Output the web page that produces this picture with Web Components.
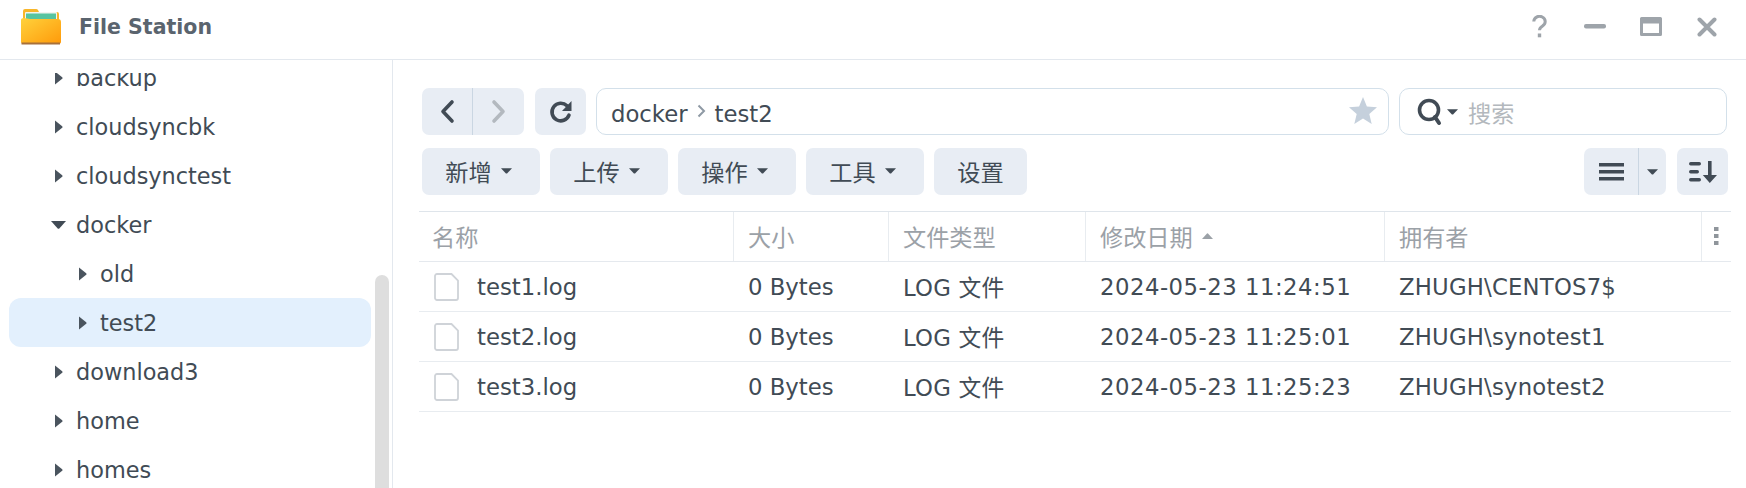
<!DOCTYPE html>
<html>
<head>
<meta charset="utf-8">
<style>
  html, body { margin: 0; height: 488px; overflow: hidden; background: #fff; }
  body { font: 22.75px "DejaVu Sans", "Noto Sans CJK SC", sans-serif; color: #414b55; }
</style>
</head>
<body>
<fs-window></fs-window>
<script>
const CARET = `<svg width="11" height="6" viewBox="0 0 12 6"><path d="M0 0h12L6.600 5.600q-.6.500-1.200 0z" fill="currentColor"/></svg>`;
const ICONS = {
  back: `<svg width="16" height="25" viewBox="0 0 16 25"><path d="M13 3 4 12.500 13 22" fill="none" stroke="currentColor" stroke-width="3.600" stroke-linecap="round" stroke-linejoin="round"/></svg>`,
  forward: `<svg width="16" height="25" viewBox="0 0 16 25"><path d="M3 3l9 9.500L3 22" fill="none" stroke="currentColor" stroke-width="3.600" stroke-linecap="round" stroke-linejoin="round"/></svg>`,
  refresh: `<svg width="24" height="24" viewBox="0 0 24 24"><path d="M20 15.200A8.800 8.800 0 1 1 18 5.800" fill="none" stroke="currentColor" stroke-width="3.600" stroke-linecap="round"/><path d="M22.500 1v10H13z" fill="currentColor"/></svg>`,
  list: `<svg width="25" height="18" viewBox="0 0 25 18"><path d="M0 0h25v3.600H0zM0 7h25v3.600H0zM0 14h25v3.600H0z" fill="currentColor"/></svg>`,
  sort: `<svg width="30" height="24" viewBox="0 0 30 24"><g fill="currentColor"><rect x="1" y="2" width="12" height="3.400" rx="1.700"/><rect x="1" y="10" width="10" height="3.400" rx="1.700"/><rect x="1" y="18" width="12" height="3.400" rx="1.700"/><path d="M20 1h3.600v14H29l-7.200 8-7-8H20z"/></g></svg>`
};

class FsWindow extends HTMLElement {
  constructor() {
    super();
    this.attachShadow({ mode: 'open' }).innerHTML = `
      <style>
        :host { display: grid; grid-template-rows: 60px 428px; height: 488px; }
        .body { display: grid; grid-template-columns: 393px 1fr; min-height: 0; }
      </style>
      <fs-titlebar></fs-titlebar>
      <div class="body">
        <fs-tree></fs-tree>
        <fs-main></fs-main>
      </div>`;
  }
}

class FsTitlebar extends HTMLElement {
  constructor() {
    super();
    this.attachShadow({ mode: 'open' }).innerHTML = `
      <style>
        :host { display: flex; align-items: center; box-sizing: border-box; height: 60px; border-bottom: 1px solid #e3e8ee; padding: 0 11px 6px 20px; }
        .logo { display: block; margin-right: 17px; }
        .title { font-size: 20.500px; font-weight: bold; color: #5a646e; flex: 1; }
        .btns { display: flex; align-items: center; color: #9ea4aa; }
        .btns span { width: 56px; display: flex; justify-content: center; align-items: center; }
        svg { display: block; }
      </style>
      <svg class="logo" width="42" height="37" viewBox="0 0 42 37">
        <defs>
          <linearGradient id="g" x1="0" y1="0" x2="1" y2="1"><stop offset="0" stop-color="#ffd23c"/><stop offset="1" stop-color="#ff9a0a"/></linearGradient>
        </defs>
        <path d="M3 3q0-2 2-2h11q1.500 0 2 1l1 2h18q2 0 2 2v8H3z" fill="#f8b62a"/>
        <rect x="5" y="4" width="32" height="8" rx="1" fill="#f2f4ee"/>
        <rect x="6" y="5.500" width="30" height="8" fill="#57c4a0"/>
        <path d="M1 12q0-2 3-2l6 1h28q3 0 3 3v20q0 1.500-1.500 1.500h-37Q1 35.500 1 34z" fill="url(#g)"/>
        <path d="M1.500 34.500h38.500v2H1.500z" fill="#a8703a"/>
      </svg>
      <div class="title">File Station</div>
      <div class="btns">
        <span><svg width="15" height="23" viewBox="0 0 15 23"><path d="M1.800 6.500a5.700 5.200 0 1 1 8.800 4.400c-1.900 1.200-3.100 2.100-3.100 4.300" fill="none" stroke="currentColor" stroke-width="3"/><rect x="5.800" y="18.500" width="3.400" height="3.800" fill="currentColor"/></svg></span>
        <span><svg width="22" height="5" viewBox="0 0 22 5"><rect width="22" height="4.500" rx="2" fill="currentColor"/></svg></span>
        <span><svg width="22" height="19" viewBox="0 0 22 19"><path d="M1.500 0h19A1.500 1.500 0 0 1 22 1.500v16a1.500 1.500 0 0 1-1.500 1.500h-19A1.500 1.500 0 0 1 0 17.500v-16A1.500 1.500 0 0 1 1.500 0zM3 6.500V16h16V6.500z" fill="currentColor" fill-rule="evenodd"/></svg></span>
        <span><svg width="20" height="20" viewBox="0 0 20 20"><path d="M2.500 2.500l15 15M17.500 2.500l-15 15" stroke="currentColor" stroke-width="4" stroke-linecap="round" fill="none"/></svg></span>
      </div>`;
  }
}

class FsTree extends HTMLElement {
  constructor() {
    super();
    const rows = [
      ['backup', 0], ['cloudsyncbk', 0], ['cloudsynctest', 0],
      ['docker', 0, 'open'], ['old', 1], ['test2', 1, 'selected'],
      ['download3', 0], ['home', 0], ['homes', 0]
    ];
    this.attachShadow({ mode: 'open' }).innerHTML = `
      <style>
        :host { display: block; position: relative; overflow: hidden; border-right: 1px solid #e3e8ee; box-sizing: border-box; font-size: 22.400px; padding-top: 13px; }
        .scroller { height: 415px; overflow: hidden; }
        .list { margin-top: -20px; padding: 0 21px 0 9px; }
        .thumb { position: absolute; left: 375px; top: 215px; width: 14px; height: 240px; background: #dedede; border-radius: 7px 7px 0 0; }
      </style>
      <div class="scroller">
        <div class="list">
          ${rows.map(([name, depth, state]) => `<fs-tree-row depth="${depth}" ${state || ''}>${name}</fs-tree-row>`).join('')}
        </div>
      </div>
      <div class="thumb"></div>`;
  }
}

class FsTreeRow extends HTMLElement {
  constructor() {
    super();
    this.attachShadow({ mode: 'open' });
  }

  connectedCallback() {
    const indent = 45 + Number(this.getAttribute('depth')) * 24;
    const open = this.hasAttribute('open');
    const arrow = open
      ? `<svg width="15" height="8" viewBox="0 0 15 8" style="margin-left:-3px;margin-right:-1px"><path d="M0 0h15L8.300 7.400q-.8.800-1.600 0z" fill="#414b55"/></svg>`
      : `<svg width="8" height="14" viewBox="0 0 8 14" style="margin-left:1px;margin-right:2px"><path d="M0 0.500 7.200 6.200q.8.800 0 1.600L0 13.500z" fill="#4a545e"/></svg>`;
    this.shadowRoot.innerHTML = `
      <style>
        :host { display: flex; align-items: center; height: 49px; border-radius: 12px; padding-left: ${indent}px; }
        :host([selected]) { background: #e3f0fd; }
        .a { display: flex; align-items: center; justify-content: flex-start; width: 22px; }
        svg { display: block; }
      </style>
      <span class="a">${arrow}</span><slot></slot>`;
  }
}

class FsButton extends HTMLElement {
  constructor() {
    super();
    this.attachShadow({ mode: 'open' }).innerHTML = `
      <style>
        :host { display: flex; align-items: center; justify-content: center; gap: 9px; height: 47px; background: #e8edf4; border-radius: 7px; color: #414b55; box-sizing: border-box; flex: none; }
        ::slotted(svg) { display: block; }
      </style>
      <slot></slot>`;
  }
}

class FsMain extends HTMLElement {
  constructor() {
    super();
    this.attachShadow({ mode: 'open' }).innerHTML = `
      <style>
        :host { display: block; padding: 28px 15px 0 26px; min-width: 0; }
        .bar { display: flex; height: 47px; }
        .bar + .bar { margin-top: 13px; }
        .nav { width: 102px; display: grid; grid-template-columns: 50px 1fr; margin-left: 3px; gap: 0; align-items: stretch; }
        .nav div { display: flex; align-items: center; justify-content: center; }
        .nav div + div { border-left: 1px solid #cad6e2; color: #b3b9bf; }
        .refresh { width: 51px; margin-left: 11px; }
        .path { flex: 1; margin-left: 10px; height: 47px; box-sizing: border-box; border: 1px solid #d3e0ea; border-radius: 10px; display: flex; align-items: center; padding: 4px 11px 0 14px; }
        .path .sep { margin: 0 9px; display: flex; position: relative; top: -3px; }
        .path .star { margin-left: auto; display: block; position: relative; top: -3px; }
        .search { width: 328px; margin-left: 10px; margin-right: 4px; height: 47px; box-sizing: border-box; border: 1px solid #d3e0ea; border-radius: 10px; display: flex; align-items: center; padding-left: 17px; color: #b3b8bd; font-size: 23.200px; }
        .search svg { display: block; }
        .search .q { color: #414b55; display: flex; align-items: center; gap: 3px; margin-right: 10px; }
        .tools { padding: 0 3px; gap: 10px; font-size: 23.200px; }
        fs-button.menu { width: 118px; padding: 0 5px 2px 0; }
        fs-button.plain { width: 93px; padding-bottom: 2px; }
        .spacer { flex: 1; }
        .view { width: 82px; display: grid; grid-template-columns: 54px 1fr; gap: 0; align-items: stretch; margin-right: 1px; }
        .view div { display: flex; align-items: center; justify-content: center; }
        .view div + div { border-left: 1px solid #cad6e2; }
        .sort { width: 51px; }
      </style>
      <div class="bar">
        <fs-button class="nav"><div>${ICONS.back}</div><div>${ICONS.forward}</div></fs-button>
        <fs-button class="refresh">${ICONS.refresh}</fs-button>
        <div class="path">docker<span class="sep"><svg width="9" height="14" viewBox="0 0 9 14"><path d="M1.500 1.500 7 7l-5.500 5.500" fill="none" stroke="#8e99a4" stroke-width="2"/></svg></span>test2
          <svg class="star" width="28" height="27" viewBox="0 0 28 27"><path d="M14 0l3.900 9.500L28 10.300l-7.700 6.600 2.400 10L14 21.500 5.300 26.900l2.400-10L0 10.300l10.100-.8z" fill="#c5d0dc"/></svg>
        </div>
        <div class="search">
          <span class="q"><svg width="27" height="28" viewBox="0 0 27 28"><circle cx="12" cy="12" r="9.500" fill="none" stroke="currentColor" stroke-width="3.600"/><path d="M18 19l4 6" stroke="currentColor" stroke-width="4" stroke-linecap="round"/></svg>${CARET}</span>搜索
        </div>
      </div>
      <div class="bar tools">
        <fs-button class="menu">新增${CARET}</fs-button>
        <fs-button class="menu">上传${CARET}</fs-button>
        <fs-button class="menu">操作${CARET}</fs-button>
        <fs-button class="menu">工具${CARET}</fs-button>
        <fs-button class="plain">设置</fs-button>
        <span class="spacer"></span>
        <fs-button class="view"><div>${ICONS.list}</div><div>${CARET}</div></fs-button>
        <fs-button class="sort">${ICONS.sort}</fs-button>
      </div>
      <fs-table></fs-table>`;
  }
}

const GRID = '315px 155px 197px 299px 317px 1fr';

class FsTable extends HTMLElement {
  constructor() {
    super();
    const files = [
      ['test1.log', '0 Bytes', 'LOG 文件', '2024-05-23 11:24:51', 'ZHUGH\\CENTOS7$'],
      ['test2.log', '0 Bytes', 'LOG 文件', '2024-05-23 11:25:01', 'ZHUGH\\synotest1'],
      ['test3.log', '0 Bytes', 'LOG 文件', '2024-05-23 11:25:23', 'ZHUGH\\synotest2']
    ];
    this.attachShadow({ mode: 'open' }).innerHTML = `
      <style>
        :host { display: block; margin-top: 16px; border-top: 1px solid #dfe5eb; }
        .head { display: grid; grid-template-columns: ${GRID}; height: 49px; border-bottom: 1px solid #e5e9ee; color: #9ba1a7; font-size: 23.200px; }
        .head div { display: flex; align-items: center; gap: 9px; padding: 0 0 2px 14px; border-right: 1px solid #e8ecf0; min-width: 0; }
        .head div:first-child { padding-left: 13px; }
        .head div:last-child { border-right: 0; padding-left: 0; justify-content: center; }
        .head svg { display: block; }
      </style>
      <div class="head">
        <div>名称</div><div>大小</div><div>文件类型</div>
        <div>修改日期<svg width="11" height="6" viewBox="0 0 11 6"><path d="M0 6h11L6 .4q-.5-.5-1 0z" fill="currentColor"/></svg></div>
        <div>拥有者</div>
        <div><svg width="5" height="18" viewBox="0 0 5 18"><path d="M0 0h4.500v4H0zM0 7h4.500v4H0zM0 14h4.500v4H0z" fill="#8f959b"/></svg></div>
      </div>
      ${files.map(f => `<fs-file-row>${f.map(t => `<span>${t}</span>`).join('')}</fs-file-row>`).join('')}`;
  }
}

class FsFileRow extends HTMLElement {
  constructor() {
    super();
    this.attachShadow({ mode: 'open' }).innerHTML = `
      <style>
        :host { display: grid; grid-template-columns: ${GRID}; height: 49px; border-bottom: 1px solid #e8ecf0; align-items: center; }
        ::slotted(span) { padding-left: 14px; white-space: nowrap; }
        ::slotted(span:first-child) { padding-left: 0; }
        ::slotted(span:nth-child(3)) { letter-spacing: .2px; }
        ::slotted(span:nth-child(4)) { letter-spacing: .5px; }
        ::slotted(span:nth-child(5)) { letter-spacing: .2px; }
        .name { display: flex; align-items: center; padding-left: 15px; gap: 18px; }
        svg { display: block; }
        .rest { display: contents; }
      </style>
      <div class="name">
        <svg width="25" height="28" viewBox="0 0 25 28"><path d="M3 1h14.500L24 7.500V25a2 2 0 0 1-2 2H3a2 2 0 0 1-2-2V3a2 2 0 0 1 2-2z" fill="#fff" stroke="#cfd3d8" stroke-width="1.800"/></svg>
        <slot name="n"></slot>
      </div>
      <span class="rest"><slot></slot></span>`;
  }

  connectedCallback() {
    this.firstElementChild.slot = 'n';
  }
}

customElements.define('fs-window', FsWindow);
customElements.define('fs-titlebar', FsTitlebar);
customElements.define('fs-tree', FsTree);
customElements.define('fs-tree-row', FsTreeRow);
customElements.define('fs-button', FsButton);
customElements.define('fs-main', FsMain);
customElements.define('fs-table', FsTable);
customElements.define('fs-file-row', FsFileRow);
</script>
</body>
</html>
